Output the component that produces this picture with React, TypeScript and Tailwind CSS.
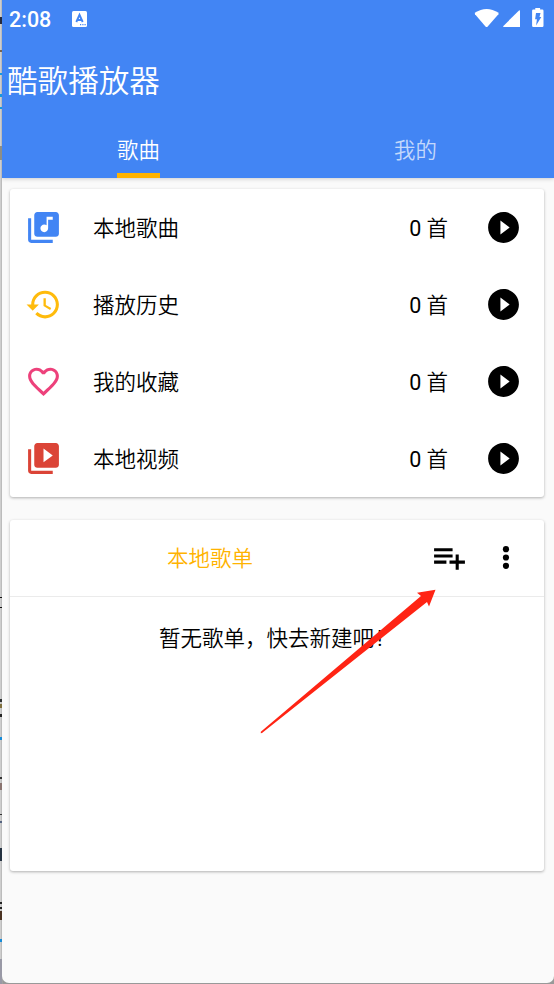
import type { ReactNode } from "react";

interface IconProps {
  className?: string;
  children: ReactNode;
}

const Icon = ({ className = "", children }: IconProps) => (
  <svg viewBox="0 0 24 24" fill="currentColor" className={`size-[37px] shrink-0 ${className}`}>
    {children}
  </svg>
);

const items = [
  {
    label: "本地歌曲",
    color: "text-[#4285f4]",
    path: "M20 2H8c-1.1 0-2 .9-2 2v12c0 1.1.9 2 2 2h12c1.1 0 2-.9 2-2V4c0-1.1-.9-2-2-2zm-2 5h-3v5.5c0 1.38-1.12 2.5-2.5 2.5S10 13.88 10 12.5s1.12-2.5 2.5-2.5c.57 0 1.08.19 1.5.51V5h4v2zM4 6H2v14c0 1.1.9 2 2 2h14v-2H4V6z",
  },
  {
    label: "播放历史",
    color: "text-[#ffbb0c]",
    path: "M13 3c-4.97 0-9 4.03-9 9H1l3.89 3.89.07.14L9 12H6c0-3.87 3.13-7 7-7s7 3.13 7 7-3.13 7-7 7c-1.93 0-3.68-.79-4.94-2.06l-1.42 1.42C8.27 19.99 10.51 21 13 21c4.97 0 9-4.03 9-9s-4.03-9-9-9zm-1 5v5l4.28 2.54.72-1.21-3.5-2.08V8H12z",
  },
  {
    label: "我的收藏",
    color: "text-[#ed417b]",
    path: "M16.5 3c-1.74 0-3.41.81-4.5 2.09C10.91 3.81 9.24 3 7.5 3 4.42 3 2 5.42 2 8.5c0 3.78 3.4 6.86 8.55 11.54L12 21.35l1.45-1.32C18.6 15.36 22 12.28 22 8.5 22 5.42 19.58 3 16.5 3zm-4.4 15.55l-.1.1-.1-.1C7.14 14.24 4 11.39 4 8.5 4 6.5 5.5 5 7.5 5c1.54 0 3.04.99 3.57 2.36h1.87C13.46 5.99 14.96 5 16.5 5c2 0 3.5 1.5 3.5 3.5 0 2.89-3.14 5.74-7.9 10.05z",
  },
  {
    label: "本地视频",
    color: "text-[#db4437]",
    path: "M4 6H2v14c0 1.1.9 2 2 2h14v-2H4V6zm16-4H8c-1.1 0-2 .9-2 2v12c0 1.1.9 2 2 2h12c1.1 0 2-.9 2-2V4c0-1.1-.9-2-2-2zm-8 12.5v-9l6 4.5-6 4.5z",
  },
];

const StatusBar = () => (
  <div className="flex h-[38px] items-center pl-[7px] pr-[10px]">
    <span className="pt-[2px] text-[21.5px] font-medium leading-none">2:08</span>
    <svg viewBox="0 0 15 16" className="-mt-px ml-[21px] h-4 w-[15px]">
      <rect width="15" height="16" rx="1.5" fill="#fff" />
      <path d="M4.3 11 7.5 3.8 10.7 11M5.4 9h4.2" fill="none" stroke="#4285f4" strokeWidth="1.9" />
      <path d="M8 13.7h1.2M10.3 13.7h1.2M12.5 13.7h1.2" stroke="#4285f4" strokeWidth="1.2" />
    </svg>
    <svg viewBox="0 0 70 21" fill="#fff" className="-mt-px ml-auto h-[21px] w-[70px]">
      <path d="M.8 4.8Q12.5-3 24.6 4.8L24.4 6.3 13.5 18.7Q12.6 19.4 11.7 18.7L1 6.3Z" />
      <path d="M45 2.5Q46 1.8 46 3.2V19H30Q28.3 19 29.4 17.9Z" />
      <path d="M61.3 0h4.8v1.5h2.2q1.2 0 1.2 1.2v15.1q0 1.2-1.2 1.2h-9q-1.2 0-1.2-1.2V2.7q0-1.2 1.2-1.2h2z" />
      <path d="M62 5h4.5l-1 4h1.8l-5.2 8.5.8-6.3h-1.8z" fill="#4285f4" />
    </svg>
  </div>
);

const Header = () => (
  <header className="relative flex h-[178px] shrink-0 flex-col bg-[#4285f4] text-white shadow-[0_1px_4px_rgba(0,0,0,0.18)]">
    <StatusBar />
    <h1 className="h-[85px] pl-[5px] pt-[22px] text-[30.6px] font-[350] leading-[44px]">酷歌播放器</h1>
    <nav className="grid flex-1 grid-cols-2 text-[21.4px] font-[350]">
      <div className="flex justify-center pr-[3px]">
        <span className="h-full border-b-[5px] border-[#ffb300] pt-[12px] leading-[32px]">歌曲</span>
      </div>
      <div className="flex justify-center pr-px pt-[12px] leading-[32px] text-white/70">我的</div>
    </nav>
  </header>
);

const Library = () => (
  <section className="h-[308px] rounded-[3px] bg-white shadow-[0_1px_3px_rgba(0,0,0,0.3)]">
    {items.map(({ label, color, path }) => (
      <div key={label} className="flex h-[77px] items-center pl-[15px] pr-[22px]">
        <Icon className={color}>
          <path d={path} />
        </Icon>
        <span className="ml-[31px] pt-[2px]">{label}</span>
        <span className="ml-auto mr-[37px] pt-[2px]">
          <span className="font-normal">0</span> 首
        </span>
        <Icon>
          <path d="M12 2C6.48 2 2 6.48 2 12s4.48 10 10 10 10-4.48 10-10S17.52 2 12 2zm-2 14.5v-9l6 4.5-6 4.5z" />
        </Icon>
      </div>
    ))}
  </section>
);

const Playlists = () => (
  <section className="mt-[23px] h-[351px] rounded-[3px] bg-white shadow-[0_1px_3px_rgba(0,0,0,0.3)]">
    <div className="flex h-[77px] items-center border-b border-[#ebebeb] pb-px pr-[20px]">
      <span className="flex-1 pr-[21px] pt-[2px] text-center text-[#ffb300]">本地歌单</span>
      <Icon className="mr-[19px]">
        <path d="M14 10H2v2h12v-2zm0-4H2v2h12V6zm4 8v-4h-2v4h-4v2h4v4h2v-4h4v-2h-4zM2 16h8v-2H2v2z" />
      </Icon>
      <Icon>
        <circle cx="12.3" cy="6.6" r="2" />
        <circle cx="12.3" cy="12" r="2" />
        <circle cx="12.3" cy="17.4" r="2" />
      </Icon>
    </div>
    <p className="pl-[149px] pt-[26px] leading-[32px]">
      暂无歌单，快去新建吧<span className="ml-[3px] font-normal">!</span>
    </p>
  </section>
);

// slivers of the window behind the emulator
const marks = [
  { top: 17, height: 7, color: "#252a3c" },
  { top: 50, height: 2, color: "#77634f" },
  { top: 73, height: 2, color: "#1697df" },
  { top: 94, height: 3, color: "#1697df" },
  { top: 107, height: 2, color: "#1697df" },
  { top: 146, height: 14, color: "#8e8e86" },
  { top: 597, height: 1, color: "#111111" },
  { top: 607, height: 1, color: "#111111" },
  { top: 699, height: 3, color: "#303333" },
  { top: 704, height: 4, color: "#80703e" },
  { top: 714, height: 3, color: "#252525" },
  { top: 737, height: 3, color: "#168bd8" },
  { top: 777, height: 2, color: "#333333" },
  { top: 783, height: 7, color: "#8a7470" },
  { top: 814, height: 1, color: "#333333" },
  { top: 821, height: 2, color: "#556481" },
  { top: 848, height: 13, color: "#263342" },
  { top: 902, height: 2, color: "#222222" },
  { top: 907, height: 2, color: "#222222" },
  { top: 911, height: 9, color: "#4b3322" },
  { top: 939, height: 3, color: "#168bd8" },
  { top: 959, height: 25, color: "#9999a6" },
];

export default function App() {
  return (
    <div className="relative h-[984px] w-[554px] overflow-hidden bg-[linear-gradient(to_right,#cecece_1px,#aaaaaa_2px,#999999_3px)] pb-px pl-[2px] font-[Roboto,'Noto_Sans_CJK_SC',sans-serif] text-black">
      {marks.map(({ top, height, color }) => (
        <i key={top} className="absolute left-0 w-[2px]" style={{ top, height, background: color }} />
      ))}
      <div className="relative flex h-full flex-col overflow-hidden rounded-b-[7px] bg-[#fafafa]">
        <Header />
        <main className="pl-[8px] pr-[10px] pt-[11px] text-[21.5px] font-[350] leading-[32px]">
          <Library />
          <Playlists />
        </main>
      </div>
      <svg viewBox="0 0 176 145" className="absolute left-[260px] top-[589px] h-[145px] w-[176px]">
        <path d="M175.5.7 157 3.7 161 7 .8 142.8V144.2L2 144 167 13 169 17.5Z" fill="#ff2414" />
      </svg>
    </div>
  );
}
